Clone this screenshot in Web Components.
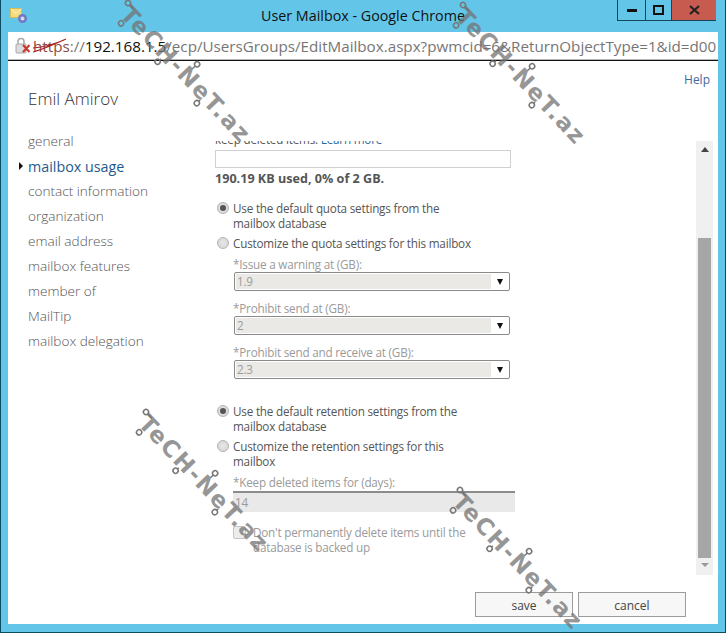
<!DOCTYPE html>
<html>
<head>
<meta charset="utf-8">
<style>
  html, body { margin: 0; padding: 0; background: #63c6e8; overflow: hidden; }
  body { width: 726px; height: 633px; position: relative; font-family: "Open Sans", "Liberation Sans", sans-serif; }
</style>
</head>
<body>
<chrome-window>
  <mail-nav slot="nav" name="Emil Amirov">
    <nav-item>general</nav-item>
    <nav-item active>mailbox usage</nav-item>
    <nav-item>contact information</nav-item>
    <nav-item>organization</nav-item>
    <nav-item>email address</nav-item>
    <nav-item>mailbox features</nav-item>
    <nav-item>member of</nav-item>
    <nav-item>MailTip</nav-item>
    <nav-item>mailbox delegation</nav-item>
  </mail-nav>
  <scroll-panel slot="panel">
    <usage-meter></usage-meter>
    <radio-row checked style="margin-top:14px">Use the default quota settings from the<br>mailbox database</radio-row>
    <radio-row style="margin-top:5px">Customize the quota settings for this mailbox</radio-row>
    <quota-select label="*Issue a warning at (GB):" value="1.9" style="margin-top:5px"></quota-select>
    <quota-select label="*Prohibit send at (GB):" value="2" style="margin-top:9px"></quota-select>
    <quota-select label="*Prohibit send and receive at (GB):" value="2.3" style="margin-top:9px"></quota-select>
    <radio-row checked style="margin-top:25px">Use the default retention settings from the<br>mailbox database</radio-row>
    <radio-row style="margin-top:5px">Customize the retention settings for this<br>mailbox</radio-row>
    <days-field label="*Keep deleted items for (days):" value="14"></days-field>
    <check-row>Don't permanently delete items until the<br>database is backed up</check-row>
  </scroll-panel>
  <flat-button slot="actions" style="width:98px">save</flat-button>
  <flat-button slot="actions" style="width:108px">cancel</flat-button>
</chrome-window>
<tech-mark style="left:128px;top:3px"></tech-mark>
<tech-mark style="left:463px;top:5px"></tech-mark>
<tech-mark style="left:146px;top:412px"></tech-mark>
<tech-mark style="left:460px;top:490px"></tech-mark>

<script>
function shadow(el, html) {
    el.attachShadow({mode: "open"}).innerHTML = html;
}

class ChromeWindow extends HTMLElement {
    constructor() {
        super();
        shadow(this, `
            <style>
                :host { display: flex; flex-direction: column; box-sizing: border-box; width: 726px; height: 633px;
                    background: #63c6e8; border: 1px solid #0f4a63; border-width: 0 1px 1px 1px; }
                .title { height: 32px; display: flex; position: relative; flex: none; }
                .title .icon { margin: 8px 0 0 9px; }
                .title .caption { position: absolute; left: 0; right: 0; top: 6px; text-align: center; font-size: 14.3px; line-height: 20px; color: #111; }
                .ctl { display: flex; margin-left: auto; margin-right: 9px; height: 21px; position: relative; }
                .ctl div { box-sizing: border-box; height: 21px; border: 1px solid #12465c; border-top: 0; display: flex; align-items: center; justify-content: center; }
                .min { width: 29px; }
                .max { width: 26px; border-left: 0 !important; }
                .close { width: 44px; background: #c75b4f; border: 0 !important; border-bottom: 1px solid #12465c !important; }
                .url { height: 28px; margin: 0 7px; flex: none; background: #fff; display: flex; align-items: center; overflow: hidden; font-size: 15.2px; white-space: nowrap; color: #767676; border-bottom: 1px solid #b5b5b5; box-sizing: border-box; padding: 0 2px 0 7px; }
                .url > svg { flex: none; margin-right: 2px; }
                .txt { flex: 1; min-width: 0; }
                .https { color: #8f4a45; position: relative; }
                .https svg { position: absolute; left: 0; top: -1px; }
                .txt b { font-weight: 400; color: #111; }
                .page { flex: 1; margin: 0 7px 8px; background: #fff; border-top: 1px solid #111; display: flex; flex-direction: column; min-height: 0; position: relative; }
                .help { position: absolute; right: 8px; top: 11px; font-size: 12px; line-height: 16px; color: #3d6c9c; }
                .body { flex: 1; display: flex; min-height: 0; }
                .foot { display: flex; justify-content: flex-end; gap: 5px; padding: 0 32px 7px 0; height: 25px; margin-top: 17px; }
            </style>
            <div class="title">
                <svg class="icon" width="18" height="16" viewBox="0 0 18 16">
                    <rect x="0.5" y="0.5" width="11" height="9" fill="#f4dd7e" stroke="#d8bc5c"/>
                    <path d="M1 1l5 4.5 5-4.5" fill="none" stroke="#fff6c8"/>
                    <circle cx="12.5" cy="10.5" r="4.5" fill="#6f7bc0"/>
                    <circle cx="12.5" cy="10.5" r="2" fill="#d5d9ef"/>
                </svg>
                <div class="caption">User Mailbox - Google Chrome</div>
                <div class="ctl">
                    <div class="min"><svg width="10" height="4"><rect width="10" height="3" y="1" fill="#111"/></svg></div>
                    <div class="max"><svg width="11" height="10"><rect x="1" y="1" width="9" height="8" fill="none" stroke="#111" stroke-width="2"/></svg></div>
                    <div class="close"><svg width="11" height="10"><path d="M1 1l9 8M10 1l-9 8" stroke="#222" stroke-width="2.2"/></svg></div>
                </div>
            </div>
            <div class="url">
                <svg width="16" height="18" viewBox="0 0 16 18">
                    <rect x="1" y="7" width="10" height="9" rx="1" fill="#dcdcdc" stroke="#a8a8a8"/>
                    <path d="M3 7V4.5a3 3 0 0 1 6 0V7" fill="none" stroke="#a8a8a8" stroke-width="1.5"/>
                    <path d="M8 8l6.500 7M14.500 8l-6.500 7" stroke="#c9342a" stroke-width="2"/>
                </svg>
                <div class="txt"><span class="https">https<svg width="34" height="20" viewBox="0 0 34 20"><path d="M0 17C11 14 22 9 33 4M0 13C11 12 22 9 31 5" fill="none" stroke="#a3231c" stroke-width="1.2"/></svg></span>://<b>192.168.1.5</b>/ecp/UsersGroups/EditMailbox.aspx?pwmcid=6&amp;ReturnObjectType=1&amp;id=d00</div>
            </div>
            <div class="page">
                <div class="help">Help</div>
                <div class="body"><slot name="nav"></slot><slot name="panel"></slot></div>
                <div class="foot"><slot name="actions"></slot></div>
            </div>
        `);
    }
}

class MailNav extends HTMLElement {
    constructor() {
        super();
        shadow(this, `
            <style>
                :host { display: block; width: 207px; flex: none; box-sizing: border-box; padding: 27px 0 0 20px; }
                h1 { margin: 0 0 19px; font-size: 17px; line-height: 22px; font-weight: 300; color: #333; }
            </style>
            <h1>${this.getAttribute("name")}</h1>
            <slot></slot>
        `);
    }
}

class NavItem extends HTMLElement {
    constructor() {
        super();
        const active = this.hasAttribute("active");
        shadow(this, `
            <style>
                :host { display: block; position: relative; height: 25px; line-height: 24px; font-size: 13.6px; font-weight: 300; white-space: nowrap;
                    color: ${active ? "#1f5a8e" : "#555"}; ${active ? "font-weight:400;font-size:14.3px;line-height:25px;" : ""} }
                i { position: absolute; left: -9px; top: 8px; border-left: 4px solid #111; border-top: 4px solid transparent; border-bottom: 4px solid transparent; }
            </style>
            ${active ? "<i></i>" : ""}<slot></slot>
        `);
    }
}

class ScrollPanel extends HTMLElement {
    constructor() {
        super();
        shadow(this, `
            <style>
                :host { display: flex; flex: 1; min-width: 0; height: 434px; margin-top: 80px; font-size: 11.7px; color: #333; }
                .clip { flex: 1; overflow: hidden; min-width: 0; }
                .bar { width: 17px; flex: none; margin-right: 5px; background: #f0f0f0; position: relative; display: flex; flex-direction: column; align-items: center; }
                .up { margin-top: 6px; border-bottom: 5px solid #444; border-left: 4px solid transparent; border-right: 4px solid transparent; }
                .thumb { width: 13px; height: 320px; background: #a6a6a6; margin-top: 86px; }
                .down { margin-top: 5px; border-top: 4px solid #999; border-left: 4px solid transparent; border-right: 4px solid transparent; }
            </style>
            <div class="clip"><slot></slot></div>
            <div class="bar"><div class="up"></div><div class="thumb"></div><div class="down"></div></div>
        `);
    }
}

class UsageMeter extends HTMLElement {
    constructor() {
        super();
        shadow(this, `
            <style>
                :host { display: block; margin-top: -10px; }
                .cut { line-height: 16px; color: #555; letter-spacing: -.2px; }
                a { color: #2a6b9c; }
                .box { width: 294px; height: 16px; border: 1px solid #d0d0d0; margin-top: 3px; }
                .used { font-weight: 700; font-size: 12.6px; color: #555; line-height: 16px; margin-top: 3px; }
            </style>
            <div class="cut">keep deleted items. <a>Learn more</a></div>
            <div class="box"></div>
            <div class="used">190.19 KB used, 0% of 2 GB.</div>
        `);
    }
}

class RadioRow extends HTMLElement {
    constructor() {
        super();
        const on = this.hasAttribute("checked");
        shadow(this, `
            <style>
                :host { display: flex; gap: 4px; line-height: 15px; color: #555; letter-spacing: -.2px; white-space: nowrap; }
                .dot { width: 12px; height: 12px; flex: none; margin: 1px 0 0 2px; border-radius: 50%; border: 1px solid #b4b4b4; background: radial-gradient(circle, #e8e8e8, #d2d2d2); box-sizing: border-box; display: flex; align-items: center; justify-content: center; }
                .dot i { width: 6px; height: 6px; border-radius: 50%; background: #555; }
            </style>
            <div class="dot">${on ? "<i></i>" : ""}</div><div><slot></slot></div>
        `);
    }
}

class QuotaSelect extends HTMLElement {
    constructor() {
        super();
        shadow(this, `
            <style>
                :host { display: block; margin-left: 18px; color: #9a9a9a; letter-spacing: -.2px; }
                label { display: block; line-height: 16px; }
                .sel { box-sizing: border-box; width: 276px; height: 19px; margin-left: 1px; border: 1px solid #8a8a8a; border-radius: 2px; display: flex; padding: 1px; }
                .val { flex: 1; background: #eae9e5; line-height: 15px; padding-left: 1px; color: #9c9c9c; }
                .arr { width: 17px; display: flex; align-items: center; justify-content: center; }
                .arr i { border-top: 6px solid #111; border-left: 3.5px solid transparent; border-right: 3.5px solid transparent; }
            </style>
            <label>${this.getAttribute("label")}</label>
            <div class="sel"><div class="val">${this.getAttribute("value")}</div><div class="arr"><i></i></div></div>
        `);
    }
}

class DaysField extends HTMLElement {
    constructor() {
        super();
        shadow(this, `
            <style>
                :host { display: block; margin: 5px 0 0 18px; color: #9a9a9a; letter-spacing: -.2px; }
                label { display: block; line-height: 16px; }
                .inp { box-sizing: border-box; width: 282px; height: 21px; margin-top: 1px; background: #e9e9e9; border-top: 2px solid #8c8c8c; padding-left: 2px; line-height: 19px; }
            </style>
            <label>${this.getAttribute("label")}</label>
            <div class="inp">${this.getAttribute("value")}</div>
        `);
    }
}

class CheckRow extends HTMLElement {
    constructor() {
        super();
        shadow(this, `
            <style>
                :host { display: flex; gap: 7px; margin: 13px 0 0 18px; line-height: 15px; color: #9a9a9a; letter-spacing: -.2px; white-space: nowrap; }
                i { width: 11px; height: 11px; flex: none; margin-top: 1px; border: 1px solid #c4c4c4; border-radius: 2px; background: #ececec; }
            </style>
            <i></i><div><slot></slot></div>
        `);
    }
}

class FlatButton extends HTMLElement {
    constructor() {
        super();
        shadow(this, `
            <style>
                :host { display: block; box-sizing: border-box; height: 25px; line-height: 25px; text-align: center; font-size: 12px; color: #444; background: #f7f7f7; border: 1px solid #9c9c9c; }
            </style>
            <slot></slot>
        `);
    }
}

class TechMark extends HTMLElement {
    constructor() {
        super();
        shadow(this, `
            <style>
                :host { display: block; position: absolute; width: 185px; height: 20px; transform-origin: 0 0; transform: rotate(46.5deg); pointer-events: none; }
                span { position: absolute; left: 3px; top: -3px; font: 700 23px/20px "DejaVu Sans", sans-serif; color: rgba(115,115,115,.75); white-space: nowrap; letter-spacing: 1.7px; }
                svg { position: absolute; left: 0; top: 0; overflow: visible; }
            </style>
            <svg width="185" height="20" fill="none" stroke="#777" stroke-width="1.5">
                <circle cx="0" cy="0" r="2.6"/><path d="M2.500 0h6"/>
                <circle cx="10" cy="19" r="2.6"/>
                <circle cx="63" cy="19" r="2.6"/><path d="M63 16.500v-2"/>
                <circle cx="92" cy="-8" r="2.600"/><path d="M92 -5.500v4"/>
                <circle cx="120" cy="19" r="2.6"/><path d="M120 16.500v-2"/>
            </svg>
            <span>TeCH-NeT.az</span>
        `);
    }
}

customElements.define("chrome-window", ChromeWindow);
customElements.define("mail-nav", MailNav);
customElements.define("nav-item", NavItem);
customElements.define("scroll-panel", ScrollPanel);
customElements.define("usage-meter", UsageMeter);
customElements.define("radio-row", RadioRow);
customElements.define("quota-select", QuotaSelect);
customElements.define("days-field", DaysField);
customElements.define("check-row", CheckRow);
customElements.define("flat-button", FlatButton);
customElements.define("tech-mark", TechMark);
</script>
</body>
</html>
